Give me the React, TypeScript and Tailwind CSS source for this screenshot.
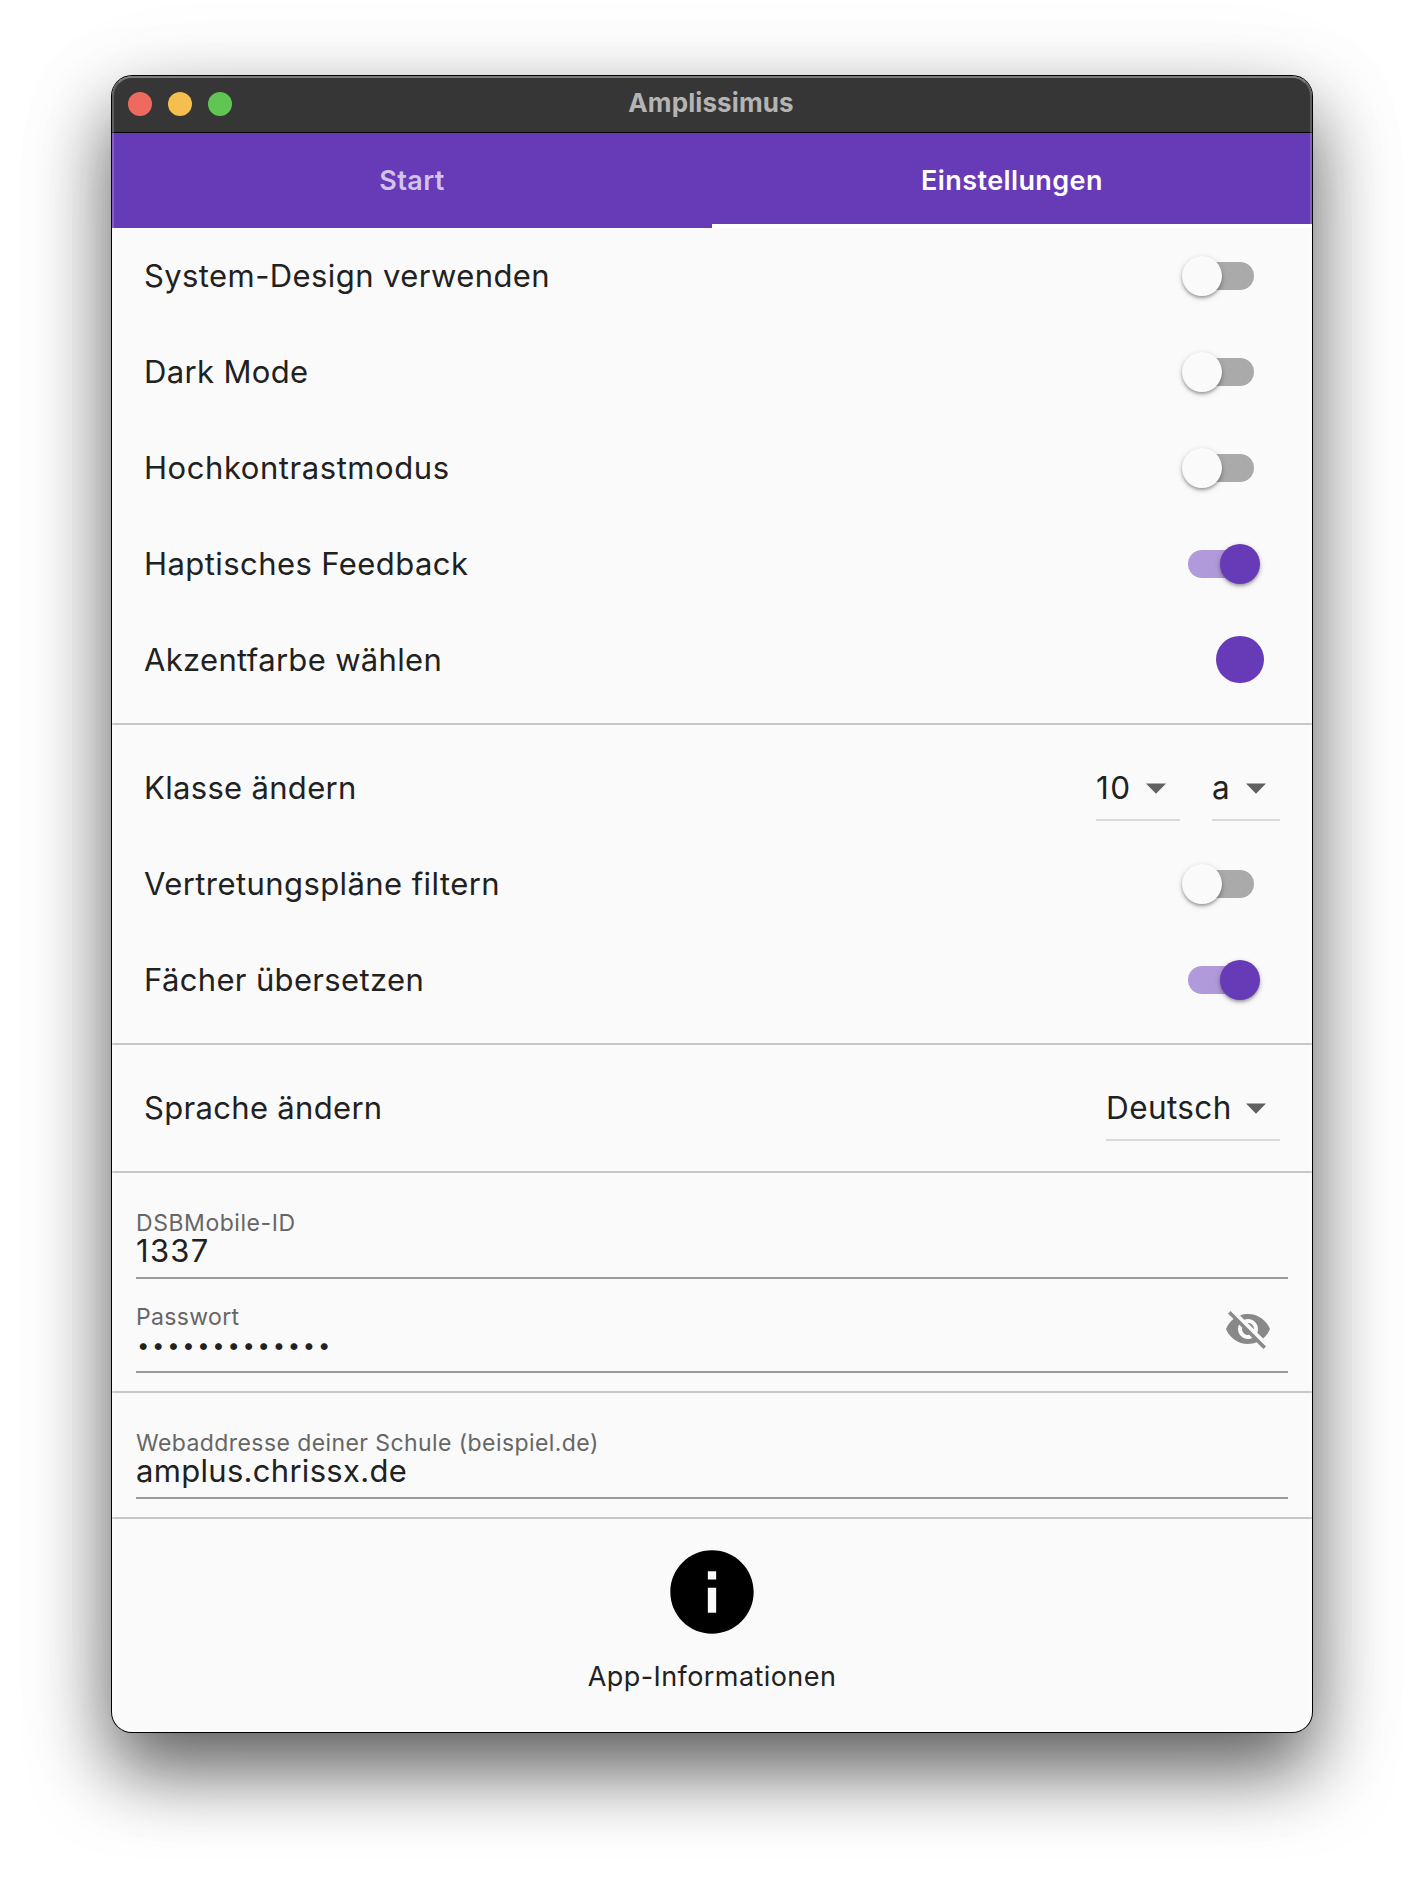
import { useState } from "react";
import { MdVisibilityOff, MdInfo } from "react-icons/md";

function Toggle({ initial }: { initial: boolean }) {
  const [on, setOn] = useState(initial);
  return (
    <button
      role="switch"
      aria-checked={on}
      onClick={() => setOn(!on)}
      className="relative mr-[26px] flex h-10 w-[66px] items-center"
    >
      <span className={`h-7 w-full rounded-full ${on ? "bg-[#b09ada]" : "bg-[#aaaaaa]"}`} />
      <span
        className={`absolute top-0 size-10 rounded-full shadow-[0_2px_3px_rgba(0,0,0,0.28),0_2px_6px_rgba(0,0,0,0.16)] ${
          on ? "left-8 bg-[#673ab7]" : "-left-1.5 bg-[#fafafa]"
        }`}
      />
    </button>
  );
}

function Row({ label, spacing, children }: { label: string; spacing: string; children: React.ReactNode }) {
  return (
    <div className="flex h-24 items-center justify-between px-8">
      <span className={`text-[31px] leading-10 whitespace-nowrap ${spacing}`}>{label}</span>
      {children}
    </div>
  );
}

function Divider() {
  return (
    <div className="flex h-8 items-center">
      <div className="h-0.5 w-full bg-[#c8c8c8]" />
    </div>
  );
}

function Select({ value, width, spacing }: { value: string; width: string; spacing: string }) {
  return (
    <div className={`relative flex h-[66px] items-center border-b-2 border-[#d9d9d9] pt-0.5 ${width}`}>
      <span className={`text-[31.5px] leading-10 ${spacing}`}>{value}</span>
      <svg viewBox="0 0 24 24" className="absolute top-[9px] right-0 size-12 fill-[#616161]">
        <path d="M7 9.7l5 5.2 5-5.2z" />
      </svg>
    </div>
  );
}

export default function App() {
  return (
    <div className="flex h-[1880px] w-[1424px] justify-center overflow-hidden bg-white pt-[76px] font-['Inter','Liberation_Sans',sans-serif] text-[#212121]">
      <div className="relative flex h-[1656px] w-[1200px] flex-col overflow-hidden rounded-[20px] bg-[#fafafa] shadow-[0_0_0_1px_#000,0_38px_76px_rgba(0,0,0,0.6),0_20px_110px_rgba(0,0,0,0.1)]">
        <header className="flex h-[57px] shrink-0 items-center border-b border-black bg-[#363636] px-4">
          <div className="flex flex-1 gap-4">
            <span className="size-6 rounded-full bg-[#ee6a5f]" />
            <span className="size-6 rounded-full bg-[#f5bf4f]" />
            <span className="size-6 rounded-full bg-[#61c554]" />
          </div>
          <h1 className="pr-0.5 pb-0.5 text-[26px] leading-8 font-bold tracking-[0.1px] text-[#b4b4b4]">Amplissimus</h1>
          <div className="flex-1" />
        </header>

        <nav className="grid h-[95px] shrink-0 grid-cols-2 bg-[#673ab7] text-[27px] font-semibold tracking-[0.4px] text-white">
          <button className="pt-px text-[#d1c3e9]">Start</button>
          <button className="border-b-4 border-white pt-[5px]">Einstellungen</button>
        </nav>

        <Row label="System-Design verwenden" spacing="tracking-[0.4px]"><Toggle initial={false} /></Row>
        <Row label="Dark Mode" spacing="tracking-[0.35px]"><Toggle initial={false} /></Row>
        <Row label="Hochkontrastmodus" spacing="tracking-[0.56px]"><Toggle initial={false} /></Row>
        <Row label="Haptisches Feedback" spacing="tracking-[0.43px]"><Toggle initial={true} /></Row>
        <Row label="Akzentfarbe wählen" spacing="tracking-[0.33px]">
          <button aria-label="Akzentfarbe" className="mr-[16.4px] mb-px size-[47.2px] rounded-full bg-[#673ab7]" />
        </Row>
        <Divider />
        <Row label="Klasse ändern" spacing="tracking-[0.32px]">
          <div className="flex gap-8">
            <Select value="10" width="w-[84px]" spacing="tracking-[1.4px]" />
            <Select value="a" width="w-[68px]" spacing="tracking-[0.4px]" />
          </div>
        </Row>
        <Row label="Vertretungspläne filtern" spacing="tracking-[0.42px]"><Toggle initial={false} /></Row>
        <Row label="Fächer übersetzen" spacing="tracking-[0.35px]"><Toggle initial={true} /></Row>
        <Divider />
        <Row label="Sprache ändern" spacing="tracking-[0.32px]">
          <Select value="Deutsch" width="w-[174px]" spacing="tracking-[0.4px]" />
        </Row>
        <Divider />

        <section className="px-6">
          <div className="flex h-[91px] flex-col justify-end border-b-2 border-[#999999] pb-[11px]">
            <span className="text-[23px] leading-[26px] tracking-[0.55px] text-[#666666]">DSBMobile-ID</span>
            <span className="text-[31px] leading-[30px] tracking-[1.3px]">1337</span>
          </div>
          <div className="flex h-[94px] items-center justify-between border-b-2 border-[#999999]">
            <div className="flex h-full flex-col justify-end pb-2.5">
              <span className="text-[23px] leading-[26px] tracking-[0.35px] text-[#666666]">Passwort</span>
              <span className="pl-px text-[22px] leading-[31px] tracking-[2.7px]">•••••••••••••</span>
            </div>
            <MdVisibilityOff className="mt-2 mr-4 size-12 text-[#898989]" />
          </div>
        </section>
        <div className="mt-[18px] h-0.5 shrink-0 bg-[#c8c8c8]" />
        <section className="px-6">
          <div className="flex h-[106px] flex-col justify-end border-b-2 border-[#999999] pb-[11px]">
            <span className="text-[23px] leading-[26px] tracking-[0.42px] text-[#666666]">Webaddresse deiner Schule (beispiel.de)</span>
            <span className="text-[31px] leading-[30px] tracking-[0.3px]">amplus.chrissx.de</span>
          </div>
        </section>
        <div className="mt-[18px] h-0.5 shrink-0 bg-[#c8c8c8]" />

        <button className="flex flex-col items-center pt-[23px]">
          <MdInfo className="size-[100px] text-black" />
          <span className="mt-[19px] text-[27px] leading-8 tracking-[0.43px]">App-Informationen</span>
        </button>

        <div className="pointer-events-none absolute inset-0 rounded-[20px] border-2 border-white/20 border-t-white/35" />
      </div>
    </div>
  );
}
